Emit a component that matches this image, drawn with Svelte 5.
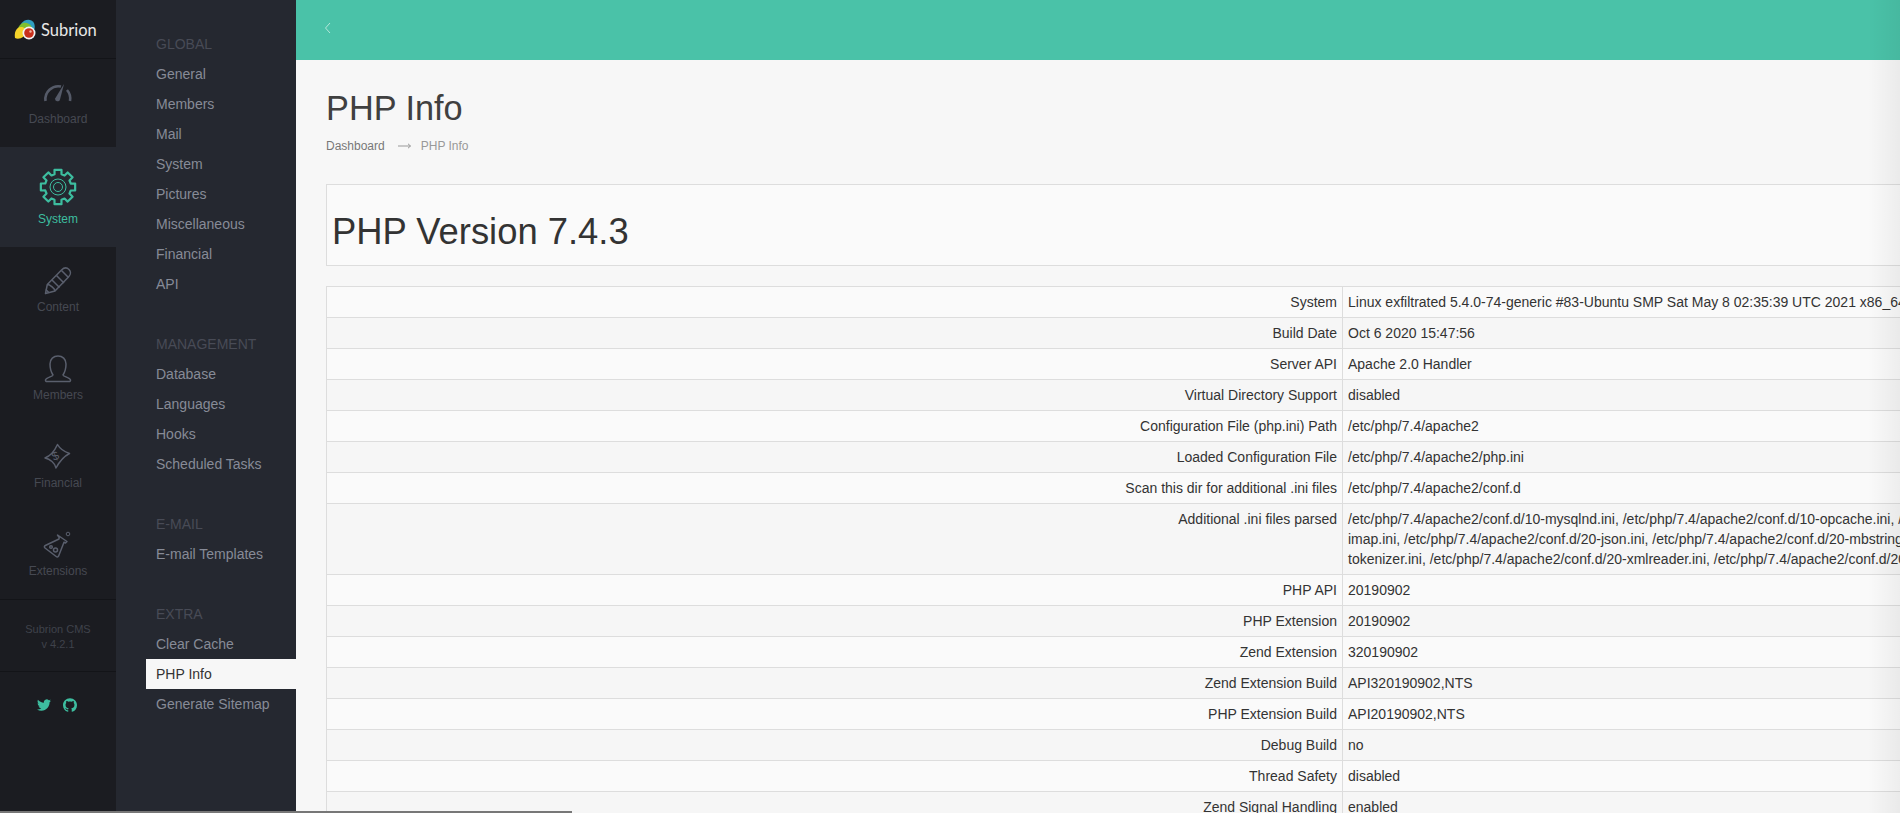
<script lang="ts">
  const groups = [
    { title: "Global", items: ["General", "Members", "Mail", "System", "Pictures", "Miscellaneous", "Financial", "API"] },
    { title: "Management", items: ["Database", "Languages", "Hooks", "Scheduled Tasks"] },
    { title: "E-mail", items: ["E-mail Templates"] },
    { title: "Extra", items: ["Clear Cache", "PHP Info", "Generate Sitemap"] }
  ];

  const rows = [
    ["System", ["Linux exfiltrated 5.4.0-74-generic #83-Ubuntu SMP Sat May 8 02:35:39 UTC 2021 x86_64"]],
    ["Build Date", ["Oct 6 2020 15:47:56"]],
    ["Server API", ["Apache 2.0 Handler"]],
    ["Virtual Directory Support", ["disabled"]],
    ["Configuration File (php.ini) Path", ["/etc/php/7.4/apache2"]],
    ["Loaded Configuration File", ["/etc/php/7.4/apache2/php.ini"]],
    ["Scan this dir for additional .ini files", ["/etc/php/7.4/apache2/conf.d"]],
    ["Additional .ini files parsed", [
      "/etc/php/7.4/apache2/conf.d/10-mysqlnd.ini, /etc/php/7.4/apache2/conf.d/10-opcache.ini, /etc/php/7.4/apache2/conf.d/10-pdo.ini, /etc/php/7.4/apache2/conf.d/20-",
      "imap.ini, /etc/php/7.4/apache2/conf.d/20-json.ini, /etc/php/7.4/apache2/conf.d/20-mbstring.ini, /etc/php/7.4/apache2/conf.d/20-phar.ini",
      "tokenizer.ini, /etc/php/7.4/apache2/conf.d/20-xmlreader.ini, /etc/php/7.4/apache2/conf.d/20-xmlwriter.ini"
    ]],
    ["PHP API", ["20190902"]],
    ["PHP Extension", ["20190902"]],
    ["Zend Extension", ["320190902"]],
    ["Zend Extension Build", ["API320190902,NTS"]],
    ["PHP Extension Build", ["API20190902,NTS"]],
    ["Debug Build", ["no"]],
    ["Thread Safety", ["disabled"]],
    ["Zend Signal Handling", ["enabled"]]
  ] as [string, string[]][];

  // 8-tooth gear outline, rounded by the stroke join
  const gearPoints = Array.from({ length: 8 }, (_, i) => {
    const a = (i * Math.PI) / 4 - Math.PI / 2;
    return [[-0.2, 17.5], [0.2, 17.5], [0.27, 13.2], [0.52, 13.2]].map(([d, r]) =>
      `${(19 + r * Math.cos(a + d)).toFixed(2)},${(19 + r * Math.sin(a + d)).toFixed(2)}`
    ).join(" ");
  }).join(" ");
</script>

<div class="page">
  <nav class="rail">
    <div class="logo">
      <svg width="24" height="24" viewBox="0 0 24 24">
        <path d="M7 6C10 1 17 0 20 5c1 3 1 5 0 7L9 10z" fill="#2f9fc0" />
        <path d="M4 11C5 6 10 3 15 6c2 1 3 3 3 5L8 15z" fill="#7fbf2f" />
        <path d="M1 20c-1-5 1-11 6-11 3 0 5 2 5 5 0 5-7 8-11 6z" fill="#f5d32a" />
        <circle cx="15" cy="15" r="6.5" fill="#f4f4f4" />
        <circle cx="15" cy="15" r="4.8" fill="#c9301c" />
        <circle cx="16.5" cy="13.5" r="1.2" fill="#f3b3a0" />
      </svg>
      <span>Subrion</span>
    </div>

    <a class="rail-item">
      <svg width="32" height="32" viewBox="0 1 32 32" fill="none" stroke="#555a68">
        <path d="M3.500 25a13 13 0 0 1 15.500-14.500M25 14a13 13 0 0 1 3 11" stroke-width="2.600" />
        <path d="M22 8L18 23.500a2.400 2.400 0 0 1-4.700-1.300z" fill="#555a68" stroke="none" />
      </svg>
      <span>Dashboard</span>
    </a>

    <a class="rail-item active">
      <svg class="gear" width="38" height="38" viewBox="0 0 38 38" fill="none" stroke="#3dbd9f">
        <polygon points={gearPoints} stroke-width="2.200" stroke-linejoin="round" />
        <circle cx="19" cy="19" r="8" stroke-width="1" />
        <circle cx="19" cy="19" r="4.500" stroke-width="1" />
      </svg>
      <span>System</span>
    </a>

    <a class="rail-item">
      <svg width="32" height="32" viewBox="0 0 32 32" fill="none" stroke="#5a5f6d" stroke-width="1.500" stroke-linejoin="round">
        <path d="M3.500 28.500l1.800-9L19.500 5c2.500-2.500 5.500-2.500 7.500-.5s2 5-.5 7.500L13 26z" />
        <path d="M5.300 19.500c2.500 0 7.700 4 7.700 6.500M10 15l7.500 7.500M14.500 10.500l7.500 7.500M19.500 5.500l7 7M3.800 24.500l3 3" />
      </svg>
      <span>Content</span>
    </a>

    <a class="rail-item">
      <svg width="32" height="32" viewBox="0 0 32 32" fill="none" stroke="#5a5f6d" stroke-width="1.500" stroke-linejoin="round">
        <path d="M11 22C9 19 8 15 8 11c0-5 3.500-8 8-8s8 3 8 8c0 4-1 8-3 11 0 1.500 7 2.500 7.500 5 .2 1-.5 1.500-1.500 1.500H5c-1 0-1.700-.5-1.500-1.500C4 24.500 11 23.500 11 22z" />
      </svg>
      <span>Members</span>
    </a>

    <a class="rail-item">
      <svg width="32" height="32" viewBox="0 0 32 32" fill="none" stroke="#5a5f6d" stroke-width="1.500" stroke-linejoin="round">
        <path d="M3 17C8 15 13 9 15.500 3.500c2 3.500 6 7 12 9-4 2-10 8-13.500 14.500C13 22 8 18 3 17z" />
        <text x="0" y="0" transform="translate(12 20) rotate(-25)" class="bill">$</text>
      </svg>
      <span>Financial</span>
    </a>

    <a class="rail-item">
      <svg width="32" height="32" viewBox="0 0 32 32" fill="none" stroke="#5a5f6d" stroke-width="1.500" stroke-linejoin="round">
        <path d="M15.500 6L25 12.500 23.500 14l-1.500-.8-5.500 14c-.5 1-1.500 1-2.300.3L3 19c-1-1-.8-2 .3-2.500L17 10l.2-1.500z" />
        <circle cx="9" cy="18" r="1.300" />
        <circle cx="13.500" cy="21" r="2" />
        <circle cx="26" cy="5" r="1.800" stroke-width="1" />
      </svg>
      <span>Extensions</span>
    </a>

    <div class="version">Subrion CMS<br />v 4.2.1</div>

    <div class="social">
      <svg width="14" height="14" viewBox="0 0 24 24" fill="#3dbd9f">
        <path d="M23.953 4.570a10 10 0 01-2.825.775 4.958 4.958 0 002.163-2.723c-.951.555-2.005.959-3.127 1.184a4.920 4.920 0 00-8.384 4.482C7.690 8.095 4.067 6.130 1.640 3.162a4.822 4.822 0 00-.666 2.475c0 1.710.870 3.213 2.188 4.096a4.904 4.904 0 01-2.228-.616v.060a4.923 4.923 0 003.946 4.827 4.996 4.996 0 01-2.212.085 4.936 4.936 0 004.604 3.417 9.867 9.867 0 01-6.102 2.105c-.390 0-.779-.023-1.170-.067a13.995 13.995 0 007.557 2.209c9.053 0 13.998-7.496 13.998-13.985 0-.210 0-.420-.015-.630A9.935 9.935 0 0024 4.590z" />
      </svg>
      <svg width="14" height="14" viewBox="0 0 24 24" fill="#3dbd9f">
        <path d="M12 .297c-6.630 0-12 5.373-12 12 0 5.303 3.438 9.800 8.205 11.385.6.113.820-.258.820-.577 0-.285-.010-1.040-.015-2.040-3.338.724-4.042-1.610-4.042-1.610C4.422 18.070 3.633 17.700 3.633 17.700c-1.087-.744.084-.729.084-.729 1.205.084 1.838 1.236 1.838 1.236 1.070 1.835 2.809 1.305 3.495.998.108-.776.417-1.305.760-1.605-2.665-.300-5.466-1.332-5.466-5.930 0-1.310.465-2.380 1.235-3.220-.135-.303-.540-1.523.105-3.176 0 0 1.005-.322 3.300 1.230.960-.267 1.980-.399 3-.405 1.020.006 2.040.138 3 .405 2.280-1.552 3.285-1.230 3.285-1.230.645 1.653.240 2.873.120 3.176.765.840 1.230 1.910 1.230 3.220 0 4.610-2.805 5.625-5.475 5.920.420.360.810 1.096.810 2.220 0 1.606-.015 2.896-.015 3.286 0 .315.210.690.825.570C20.565 22.092 24 17.592 24 12.297c0-6.627-5.373-12-12-12" />
      </svg>
    </div>
  </nav>

  <aside class="submenu">
    {#each groups as group}
      <div class="group">
        <h4>{group.title}</h4>
        {#each group.items as item}
          <a class="sub-item" class:current={item === "PHP Info"}>{item}</a>
        {/each}
      </div>
    {/each}
  </aside>

  <main class="main">
    <header class="topbar">
      <svg width="8" height="12" viewBox="0 0 8 12" fill="none" stroke="#b5e6da" stroke-width="1">
        <path d="M6 1L1.500 6 6 11" />
      </svg>
    </header>

    <section class="content">
      <h1>PHP Info</h1>
      <div class="crumbs">
        <a>Dashboard</a>
        <svg width="13" height="6" viewBox="0 0 13 6" fill="none" stroke="#999" stroke-width="1">
          <path d="M0 3h12.500M10 .8L12.500 3 10 5.200" />
        </svg>
        <span>PHP Info</span>
      </div>

      <div class="info">
        <div class="version-box">
          <h2>PHP Version 7.4.3</h2>
        </div>

        <table>
          <colgroup>
            <col class="label-col" />
            <col />
          </colgroup>
          <tbody>
            {#each rows as [label, lines]}
              <tr>
                <td class="e">{label}</td>
                <td class="v">
                  {#each lines as line}
                    <div>{line}</div>
                  {/each}
                </td>
              </tr>
            {/each}
          </tbody>
        </table>
      </div>
    </section>
  </main>

  <div class="edge-shade"></div>
  <div class="scrollbar"></div>
</div>

<style>
  :global(body) {
    margin: 0;
    overflow: hidden;
  }

  .page {
    position: relative;
    display: grid;
    grid-template-columns: 116px 180px minmax(0, 1fr);
    height: 813px;
    overflow: hidden;
    font-family: "Liberation Sans", Arial, sans-serif;
    background: #f7f7f7;
  }

  .rail {
    display: flex;
    flex-direction: column;
    background: #1b1c21;
  }

  .logo {
    display: flex;
    align-items: center;
    gap: 3px;
    box-sizing: border-box;
    height: 59px;
    padding: 1px 0 0 14px;
    border-bottom: 1px solid #131418;
    color: #e8e8e8;
    font-family: Lato, sans-serif;
    font-size: 16.500px;
  }

  .rail-item {
    display: flex;
    flex-direction: column;
    align-items: center;
    padding: 18px 0 19px;
    color: #464952;
    font-size: 12px;
    line-height: 18px;
  }

  .rail-item svg {
    height: 32px;
  }

  .rail-item span {
    margin-top: 1px;
  }

  .rail-item.active {
    background: #252830;
    color: #3dbd9f;
  }

  .rail-item.active svg {
    height: 38px;
    margin: 3px 0;
  }

  .bill {
    fill: #5a5f6d;
    stroke: none;
    font-family: "Liberation Sans", sans-serif;
    font-size: 12px;
  }

  .version {
    height: 73px;
    box-sizing: border-box;
    padding-top: 22px;
    border-top: 1px solid #131418;
    border-bottom: 1px solid #131418;
    color: #3f424b;
    font-size: 11px;
    line-height: 15px;
    text-align: center;
  }

  .social {
    display: flex;
    justify-content: center;
    gap: 12px;
    padding: 26px 3px 0 0;
  }

  .submenu {
    box-sizing: border-box;
    padding: 29px 0 0 40px;
    background: #252830;
  }

  .group {
    display: flex;
    flex-direction: column;
    margin-bottom: 30px;
  }

  h4 {
    margin: 0;
    color: #484b56;
    font-size: 14px;
    font-weight: 400;
    line-height: 30px;
    text-transform: uppercase;
  }

  .sub-item {
    color: #878b97;
    font-size: 14px;
    line-height: 30px;
  }

  .sub-item.current {
    margin-left: -10px;
    padding-left: 10px;
    background: #f7f7f7;
    color: #333;
  }

  .main {
    min-width: 0;
    overflow: hidden;
  }

  .topbar {
    display: flex;
    align-items: center;
    height: 60px;
    box-sizing: border-box;
    padding: 0 0 4px 28px;
    background: #4ac2a8;
  }

  .content {
    padding: 28px 0 0 30px;
  }

  h1 {
    margin: 0;
    color: #404040;
    font-size: 34.300px;
    font-weight: 400;
    line-height: 40px;
  }

  .crumbs {
    display: flex;
    align-items: center;
    margin-top: 8px;
    color: #999;
    font-size: 12px;
    line-height: 20px;
  }

  .crumbs a {
    color: #777;
  }

  .crumbs svg {
    margin: 0 10px 0 13px;
  }

  .info {
    width: 2040px;
    margin-top: 28px;
  }

  .version-box {
    box-sizing: border-box;
    height: 82px;
    margin-bottom: 20px;
    padding: 27px 5px 0;
    border: 1px solid #ddd;
    border-right: 0;
    background: #fafafa;
  }

  h2 {
    margin: 0;
    color: #333;
    font-size: 36.400px;
    font-weight: 400;
    line-height: 40px;
  }

  table {
    width: 100%;
    table-layout: fixed;
    border-collapse: collapse;
    color: #333;
    font-size: 14px;
    line-height: 20px;
  }

  .label-col {
    width: 1016px;
  }

  tr:nth-child(odd) {
    background: #fafafa;
  }

  tr:nth-child(even) {
    background: #f6f6f6;
  }

  td {
    padding: 5px;
    border: 1px solid #ddd;
    vertical-align: top;
  }

  td.e {
    text-align: right;
  }

  td.v div {
    white-space: nowrap;
  }

  .edge-shade {
    position: absolute;
    top: 0;
    right: 0;
    bottom: 0;
    width: 32px;
    background: linear-gradient(90deg, rgba(0, 0, 0, 0), rgba(0, 0, 0, 0.05));
  }

  .scrollbar {
    position: absolute;
    left: 0;
    bottom: 0;
    width: 572px;
    height: 2px;
    background: #777;
  }
</style>
